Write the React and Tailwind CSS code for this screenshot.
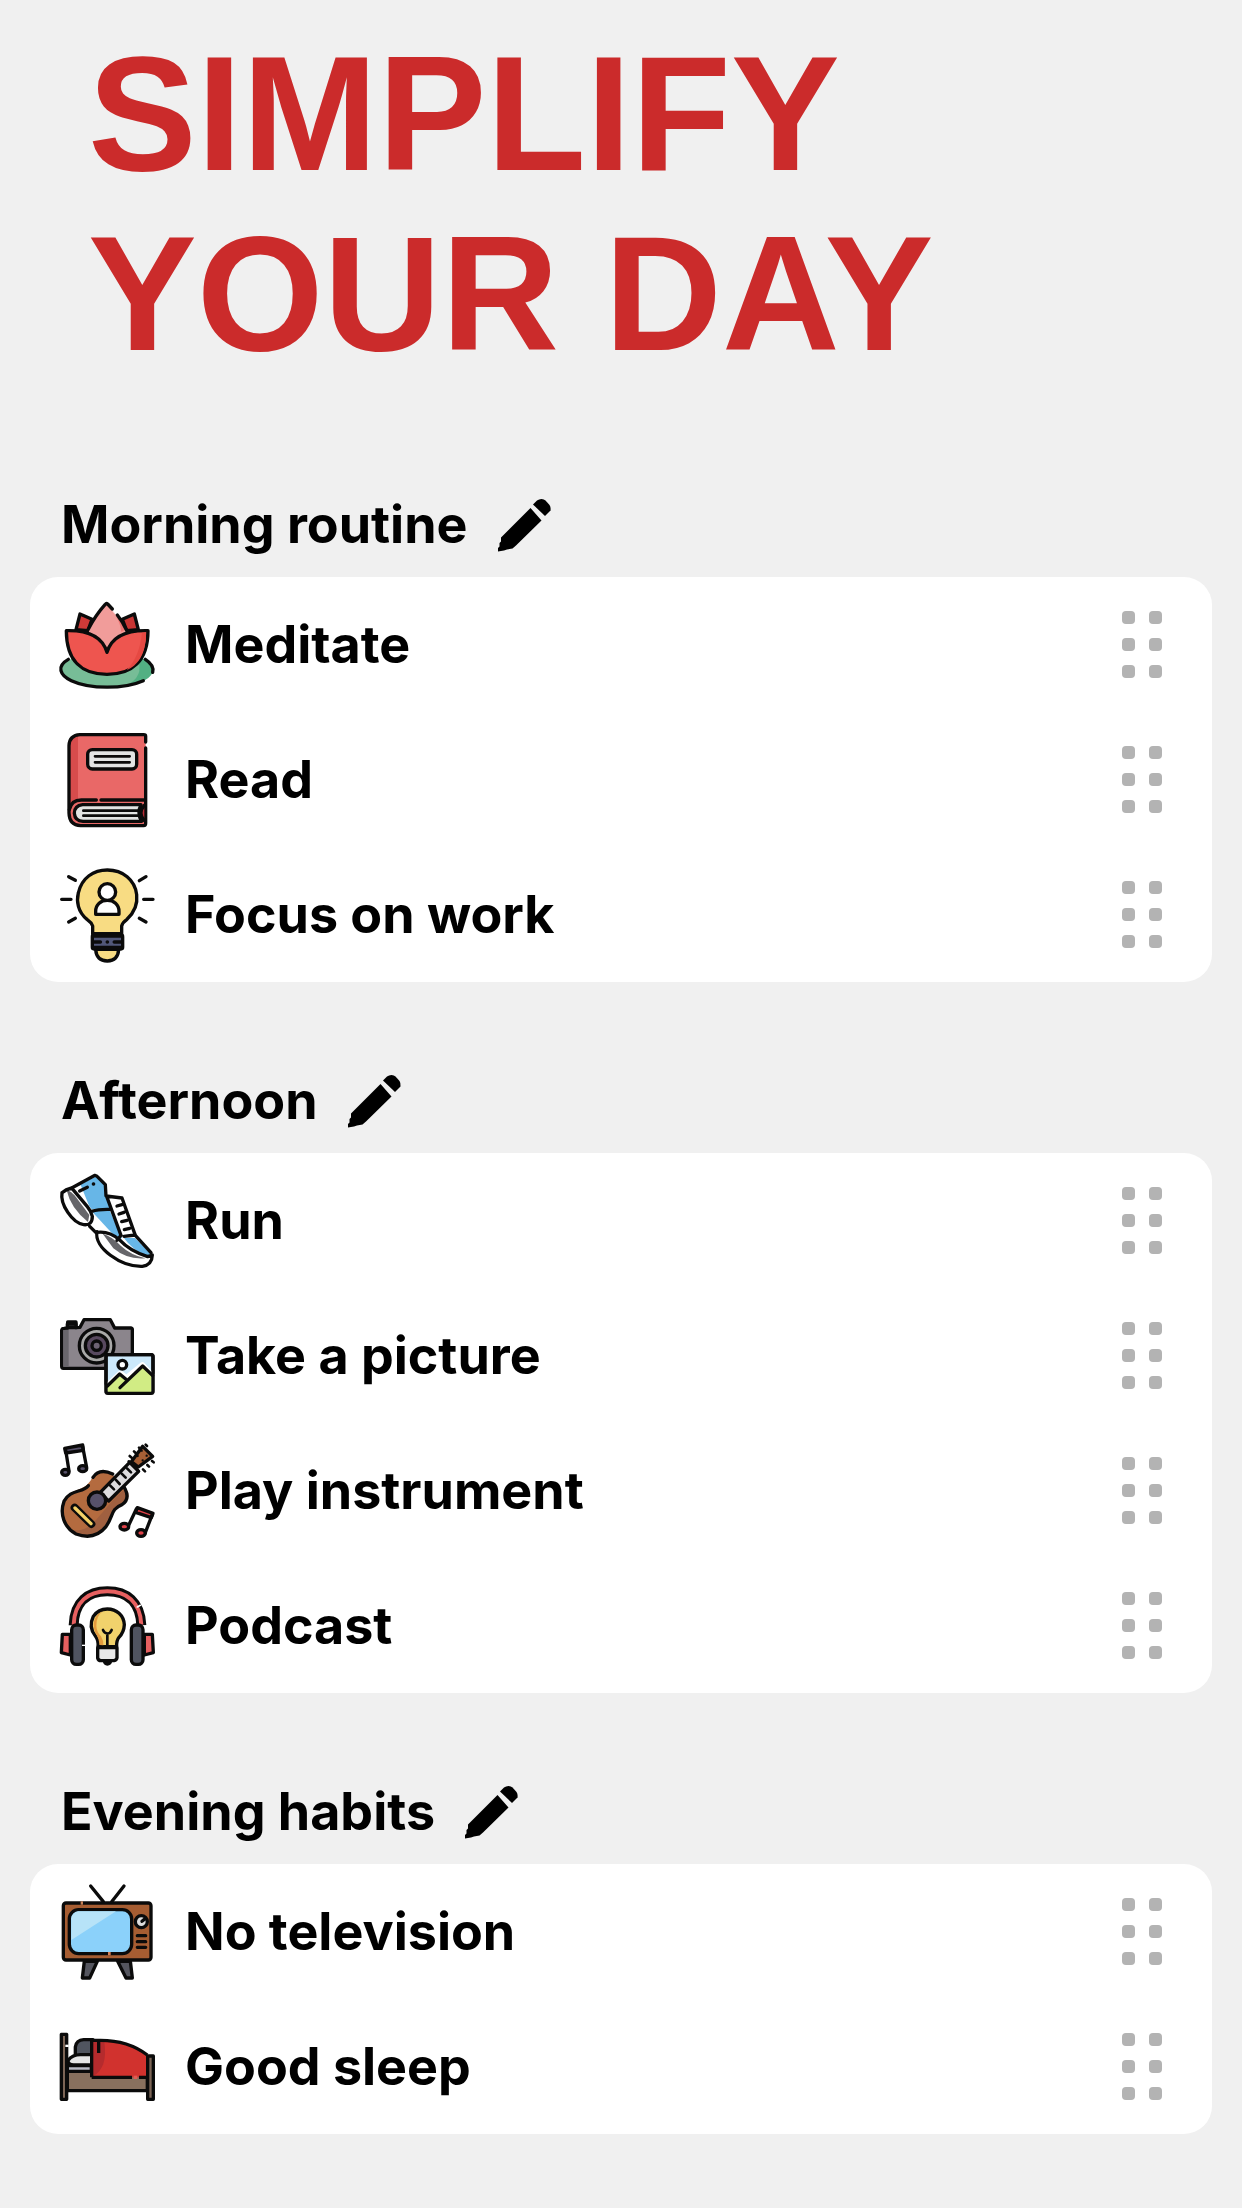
import React from "react";

function Icon({ viewBox, children }) {
  return (
    <svg
      viewBox={viewBox}
      className="size-[94px] shrink-0 overflow-visible"
      fill="none"
      stroke="#0b0b0b"
      strokeWidth="10"
      strokeLinecap="round"
      strokeLinejoin="round"
      aria-hidden="true"
    >
      {children}
    </svg>
  );
}

function Lotus() {
  return (
    <Icon viewBox="30 24 282 282">
      <ellipse cx="171" cy="239" rx="138" ry="52" fill="#77bd97" stroke="none" />
      <path d="M262 200Q309 214 309 240Q306 275 225 287Q286 262 262 200Z" fill="#52b083" stroke="none" />
      <path d="M55 208C18 229 30 256 64 272C120 298 222 298 280 272M286 208C306 221 312 233 308 247" />
      <path d="M78 119L90 72L126 88L114 122Z" fill="#cf3a38" />
      <path d="M265 119L253 72L217 88L230 122Z" fill="#c93533" />
      <path d="M171 41L228 118L210 160L171 188L132 160L114 118Q132 80 171 41Z" fill="#f19c9a" stroke="none" />
      <path d="M178 47L228 118L214 126Q212 92 178 47Z" fill="#ee7775" stroke="none" />
      <path d="M187 57L173 42Q169 39 165 44Q137 75 114 119M202 75Q217 94 229 119" />
      <path d="M49 122Q151 119 171 187Q191 119 294 122C294 213 246 253 171 253C96 253 49 213 49 122Z" fill="#ee554f" />
      <path d="M288 127C289 195 261 229 230 240Q268 202 276 128Z" fill="#e64943" stroke="none" />
    </Icon>
  );
}

function Book() {
  return (
    <Icon viewBox="30 24 282 282">
      <path d="M84 29H287V302H84Q58 299 57 264V58Q62 33 84 29Z" fill="#e96867" stroke="none" />
      <path d="M84 30V224Q66 228 58 249V59Q63 35 84 30Z" fill="#d74c4c" stroke="none" />
      <path d="M287 51V34Q287 29 281 29H90Q58 31 57 62V264Q58 301 92 302H281Q287 302 287 295V69" />
      <path d="M58 254Q64 225 94 225H139M153 225H285" />
      <path d="M273 239H98Q73 242 73 265Q75 288 99 289H275Q260 264 273 239Z" fill="#e2e4e3" />
      <path d="M283 241Q262 264 283 287" fill="#b92c35" />
      <path d="M100 257H264M100 272H264" strokeWidth="8" />
      <rect x="113" y="74" width="147" height="58" rx="14" fill="#e2e4e4" />
      <path d="M135 94H239M135 112H239" strokeWidth="8" />
    </Icon>
  );
}

function Bulb() {
  return (
    <Icon viewBox="30 24 282 282">
      <path d="M137 268Q139 302 172 303Q204 302 206 268Z" fill="#f8dc83" />
      <path d="M128 221V198Q124 187 111 178C83 156 79 123 85 99C95 53 131 30 172 30C218 30 255 59 260 104C264 137 250 160 231 178Q218 187 215 198V221Z" fill="#f8dc83" />
      <rect x="127" y="225" width="91" height="42" rx="5" fill="#515779" />
      <path d="M130 228H215M130 263H215M132 246H151M193 246H213M172 246H172" strokeWidth="11" />
      <path d="M137 163V154C137 133 153 121 172 121C191 121 207 133 207 154V163Z" fill="#fff" />
      <circle cx="172" cy="96" r="25" fill="#fff" />
      <path d="M35 118H63M281 118H309M56 50L76 61M268 62L288 50M56 186L76 175M268 175L288 186" />
    </Icon>
  );
}

function Shoe() {
  return (
    <Icon viewBox="30 27 282 282">
      <path d="M36 83L61 69L139 31L166 56L170 94L216 99L255 211L306 261Q312 304 276 304Q235 305 190 276Q137 239 138 203L119 184Q89 181 67 157Q34 121 36 83Z" fill="#fff" stroke="none" />
      <path d="M82 64L139 34L165 59L170 98L180 133H125L102 103Z" fill="#67b6e7" stroke="none" />
      <path d="M74 68L92 60L122 134L112 122Z" fill="#fff" stroke="none" />
      <path d="M125 139L177 133L216 219L204 224Z" fill="#67b6e7" stroke="none" />
      <path d="M222 219H255L302 266L293 277Q245 253 222 219Z" fill="#67b6e7" stroke="none" />
      <path d="M50 76Q62 76 80 99L118 150L114 171Q62 130 50 76Z" fill="#66666a" stroke="none" />
      <path d="M158 206Q185 213 213 243Q242 270 286 280Q232 285 190 250Z" fill="#66666a" stroke="none" />
      <path d="M36 83Q47 73 65 69L135 31Q141 32 145 38L166 59L168 93L216 99L256 211L303 263M36 83C30 118 67 174 101 179Q127 182 127 154Q123 138 112 125L66 70M119 184L138 203M141 200C131 248 213 306 277 304Q306 300 307 270L293 275Q239 258 208 224Q177 197 141 202M125 139Q146 132 180 133M170 94L213 211L201 226M222 214L256 210M89 78L112 67M130 57L131 57M201 123L216 119M207 147L222 142M215 170L231 166M223 194L239 190" />
    </Icon>
  );
}

function Camera() {
  return (
    <Icon viewBox="30 12 282 282">
      <path d="M53 69V51H78V68L90 67L102 44H181L194 69H244Q248 70 247 76V186Q247 190 242 190H40Q35 190 35 184V76Q36 70 42 70Z" fill="#8b858c" />
      <path d="M40 75H56V185H40Z" fill="#69666c" stroke="none" />
      <path d="M52 57H78V68H52Z" fill="#5a555d" />
      <circle cx="140" cy="122" r="52" fill="#a9a9a8" />
      <circle cx="140" cy="122" r="34" fill="#58495f" />
      <circle cx="140" cy="122" r="14" fill="#6d6373" />
      <rect x="168" y="149" width="141" height="116" rx="6" fill="#cce9fb" />
      <path d="M172 242L211 205L229 219L277 180L305 210V261H172Z" fill="#fff" stroke="#fff" strokeWidth="17" />
      <path d="M172 244L209 207L229 222L278 183L305 211V261H172Z" fill="#d1ec84" stroke="none" />
      <path d="M210 248L278 183L308 212M172 243L209 207L228 223" />
      <circle cx="217" cy="179" r="13" fill="#fff" />
      <rect x="168" y="149" width="141" height="116" rx="6" />
    </Icon>
  );
}

function Guitar() {
  return (
    <Icon viewBox="30 27 282 282">
      <path d="M126 130Q147 98 188 119L221 152Q248 185 215 211C184 223 190 249 170 275C141 311 97 313 65 285C27 254 27 204 55 181C83 157 104 168 126 130Z" fill="#b46b3f" stroke="none" />
      <path d="M227 160Q249 186 215 211C184 223 190 249 170 275C141 311 97 313 65 285C135 295 148 224 227 160Z" fill="#a06040" stroke="none" />
      <path d="M129 127Q148 98 188 117M115 152C98 174 60 162 42 199C28 238 43 278 78 297C116 311 147 301 168 275C192 240 181 223 216 209Q240 193 226 163L222 156" />
      <path d="M150 173L239 82L266 109L176 198Z" fill="#dddcde" />
      <path d="M244 80L278 34L308 64L265 96Z" fill="#a76036" />
      <path d="M236 79L265 107M180 151L192 163M197 134L209 147M215 116L227 128M231 100L243 112M267 38L272 43M252 49L257 54M239 63L246 69M292 90L297 95M306 78L311 82M279 103L285 109M287 29L291 33" strokeWidth="8" />
      <path d="M275 47L275 47M290 62L290 62M263 63L263 63M278 76L278 76" strokeWidth="7" />
      <circle cx="141" cy="197" r="26" fill="#57516a" />
      <path d="M74 218L124 267" strokeWidth="24" />
      <path d="M75 219L123 266" stroke="#f4d268" />
      <path d="M44 40L98 30L100 46L47 54Z" fill="#57516a" />
      <path d="M47 45L57 108M98 35L110 98" />
      <ellipse cx="46" cy="112" rx="11" ry="9" fill="#57516a" />
      <ellipse cx="98" cy="101" rx="12" ry="9" fill="#57516a" />
      <path d="M262 218L309 235L304 248L257 232Z" fill="#e04148" />
      <path d="M259 222L235 273M306 241L285 295" />
      <ellipse cx="223" cy="275" rx="13" ry="10" fill="#e04148" />
      <ellipse cx="273" cy="294" rx="13" ry="10" fill="#e04148" />
    </Icon>
  );
}

function Headphones() {
  return (
    <Icon viewBox="30 12 282 282">
      <path d="M71 151C73 80 115 49 172 49C229 49 271 80 274 151" strokeWidth="30" strokeLinecap="butt" />
      <path d="M71 149C73 80 115 49 172 49C229 49 271 80 274 149" stroke="#e76060" strokeWidth="12" strokeLinecap="butt" />
      <path d="M262 96L271 91" stroke="#fff" strokeWidth="5" />
      <path d="M61 178H37L34 233L61 240Z" fill="#e76060" />
      <path d="M283 178H307L310 233L283 240Z" fill="#e76060" />
      <rect x="65" y="150" width="35" height="118" rx="14" fill="#505460" />
      <rect x="244" y="150" width="35" height="118" rx="14" fill="#505460" />
      <path d="M101 209V213" stroke="#fff" strokeLinecap="butt" />
      <path d="M163 258Q165 267 172 267Q180 267 182 258Z" fill="#111" />
      <path d="M143 218V249Q145 257 153 257H192Q200 255 201 248V218Z" fill="#e8e8e8" />
      <path d="M144 215Q146 195 136 183C121 165 121 143 130 124Q145 102 172 102C200 102 221 121 223 149Q222 172 207 187Q199 197 200 215Z" fill="#f1d26c" />
      <path d="M149 210Q147 191 140 180C126 158 127 122 158 109Q138 124 139 153Q140 171 153 184Q161 197 160 211Z" fill="#e39b3e" stroke="none" />
      <path d="M159 165Q163 174 172 176Q181 175 185 165M172 177V213M147 217H198" strokeWidth="8" />
    </Icon>
  );
}

function Television() {
  return (
    <Icon viewBox="30 30 282 282">
      <path d="M103 258L97 309H119L142 259ZM203 259L228 309H247L241 258Z" fill="#55565f" />
      <path d="M122 33L160 80M222 33L185 80" />
      <rect x="40" y="84" width="263" height="171" rx="8" fill="#a65d32" />
      <path d="M92 84H99" stroke="#c78158" strokeLinecap="butt" />
      <rect x="58" y="104" width="187" height="132" rx="28" fill="#8bd1fa" />
      <path d="M84 109H198L64 195V130Q67 113 84 109Z" fill="#b7e3f8" stroke="none" />
      <path d="M174 236H182" stroke="#d27f55" strokeLinecap="butt" />
      <circle cx="274" cy="140" r="18" fill="#ddd" />
      <path d="M276 139L287 130M262 182H287M262 200H287M262 217H287" />
    </Icon>
  );
}

function Bed() {
  return (
    <Icon viewBox="30 1 282 282">
      <path d="M52 154H292V213H52Z" fill="#88705e" />
      <path d="M52 138H124V155H52Z" fill="#b9bac4" />
      <path d="M76 105V82Q79 61 101 60H129V112H76Z" fill="#50555f" />
      <path d="M54 122Q68 105 91 105H125V136H70Q53 134 54 122Z" fill="#e5e5e5" />
      <path d="M125 62H151Q235 62 292 106V173H125Z" fill="#d1322e" stroke="none" />
      <path d="M130 67H163Q174 145 130 169Z" fill="#b52b2d" stroke="none" />
      <path d="M125 173V62H151Q235 62 292 106M125 173H246M267 173H289M146 66V100" strokeLinecap="butt" />
      <path d="M251 173H262" stroke="#e35a52" strokeLinecap="butt" />
      <path d="M34 44H50V239H34ZM293 109H310V239H293Z" fill="#7c6556" />
      <path d="M51 75V82" stroke="#fff" strokeLinecap="butt" />
    </Icon>
  );
}

function Pencil() {
  return (
    <svg viewBox="0 0 53 53" className="size-[53px]" fill="#000" aria-hidden="true">
      <path d="M32.5 9L43.5 21.5L18 46.5L14.5 49.5L9 50.5L6 51.5L0 52.5V49L1.5 47.5V44L3 42.5V38.5Z" />
      <path d="M35 5.5L39 1.5Q41 0 43.5 0Q46 0 47.5 1.5L51.5 6Q53 8 52.5 11.5L47 17Z" />
    </svg>
  );
}

const sections = [
  {
    title: "Morning routine",
    items: [
      ["Meditate", Lotus],
      ["Read", Book],
      ["Focus on work", Bulb],
    ],
  },
  {
    title: "Afternoon",
    items: [
      ["Run", Shoe],
      ["Take a picture", Camera],
      ["Play instrument", Guitar],
      ["Podcast", Headphones],
    ],
  },
  {
    title: "Evening habits",
    items: [
      ["No television", Television],
      ["Good sleep", Bed],
    ],
  },
];

function DragHandle({ label }) {
  return (
    <button
      type="button"
      aria-label={`Reorder ${label}`}
      className="ml-auto grid shrink-0 cursor-grab grid-cols-2 gap-[14px]"
    >
      {[0, 1, 2, 3, 4, 5].map((dot) => (
        <span key={dot} className="size-[13px] rounded-[4px] bg-[#b3b3b3]" />
      ))}
    </button>
  );
}

function Routine({ title, items }) {
  return (
    <section>
      <header className="flex h-[104px] items-center gap-[30px] pl-[31px]">
        <h2>{title}</h2>
        <button type="button" aria-label={`Edit ${title}`}>
          <Pencil />
        </button>
      </header>
      <ul className="rounded-[28px] bg-white pr-[50px] pl-[30px]">
        {items.map(([label, Picture]) => (
          <li key={label} className="flex h-[135px] items-center gap-[31px]">
            <Picture />
            <span>{label}</span>
            <DragHandle label={label} />
          </li>
        ))}
      </ul>
    </section>
  );
}

export default function App() {
  return (
    <div className="min-h-screen bg-[#f0f0f0] px-[30px] pt-6 pb-[74px] font-['Inter',sans-serif] text-[52px] leading-[64px] font-bold text-black">
      <h1 className="pl-[58px] font-['Liberation_Sans',Arial,sans-serif] text-[163px] leading-[180px] text-[#cb2b2b]">
        SIMPLIFY
        <br />
        YOUR DAY
      </h1>
      <main className="mt-[89px] flex flex-col gap-[67px]">
        {sections.map((section) => (
          <Routine key={section.title} {...section} />
        ))}
      </main>
    </div>
  );
}
